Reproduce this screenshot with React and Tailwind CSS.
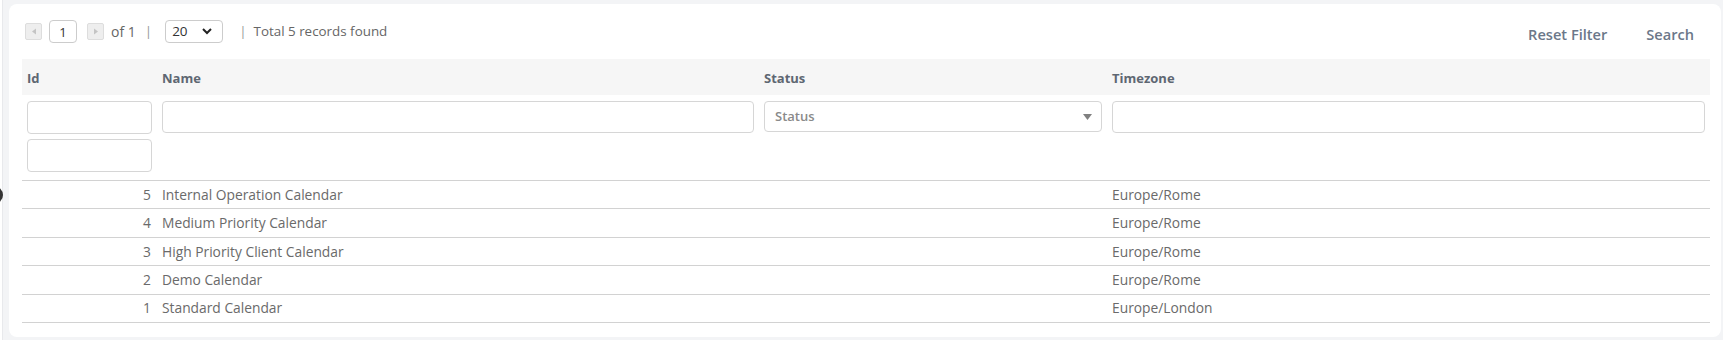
import React from 'react'

const rows = [
    { id: 5, name: 'Internal Operation Calendar', status: '', timezone: 'Europe/Rome' },
    { id: 4, name: 'Medium Priority Calendar', status: '', timezone: 'Europe/Rome' },
    { id: 3, name: 'High Priority Client Calendar', status: '', timezone: 'Europe/Rome' },
    { id: 2, name: 'Demo Calendar', status: '', timezone: 'Europe/Rome' },
    { id: 1, name: 'Standard Calendar', status: '', timezone: 'Europe/London' },
]

const cols = 'grid grid-cols-[135px_602px_348px_1fr]'

const PagerArrow = ({ dir }) => (
    <button className='w-[17px] h-[17px] bg-[#eeeeee] border border-[#dddddd] rounded-[2px] flex items-center justify-center'>
        <svg width='6' height='7' viewBox='0 0 6 7'>
            {dir === 'left'
                ? <path d='M5 0.5 L1 3.5 L5 6.5 Z' fill='#c4c4c4' />
                : <path d='M1 0.5 L5 3.5 L1 6.5 Z' fill='#c4c4c4' />}
        </svg>
    </button>
)

const App = () => {
    return (
        <div className='relative w-full h-[340px] bg-[#f3f4f6] pl-[9px] pt-[4px] pr-[2px] pb-[3px] font-["Open_Sans",sans-serif] overflow-hidden'>
            {/* side strip + collapse handle */}
            <div className='absolute left-0 top-0 h-full w-[3px] bg-white border-r border-[#e8e9ec]'></div>
            <div className='absolute left-[-15px] top-[186px] w-[18px] h-[18px] rounded-full bg-[#333333]'></div>

            <div className='bg-white rounded-lg h-full pl-[13px] pr-[11px]'>
                {/* toolbar */}
                <div className='h-[55px] pt-[16px] flex justify-between items-start'>
                    <div className='h-[23px] flex items-center pl-[3px] text-[13.4px] text-[#666666]'>
                        <PagerArrow dir='left' />
                        <input readOnly value='1' className='ml-[7px] w-[28px] h-[23px] border border-[#cccccc] rounded-[4px] text-center text-[13px] text-[#333333] outline-none' />
                        <div className='ml-[10px]'><PagerArrow dir='right' /></div>
                        <span className='ml-[7px] text-[14px]'>of 1</span>
                        <span className='ml-[9px] text-[#999999]'>|</span>
                        <div className='ml-[13px] w-[58px] h-[23px] border border-[#cccccc] rounded-[4px] flex items-center justify-between pl-[6px] pr-[10px] text-[13.5px] text-[#333333]'>
                            <span>20</span>
                            <svg width='10' height='7' viewBox='0 0 10 7'>
                                <path d='M1 1 L5 5 L9 1' fill='none' stroke='#222222' strokeWidth='2' />
                            </svg>
                        </div>
                        <span className='ml-[16px] text-[#999999]'>|</span>
                        <span className='ml-[7px]'>Total 5 records found</span>
                    </div>
                    <div className='flex items-center gap-[9px] text-[14.6px] font-semibold text-[#6b7789]'>
                        <button className='h-[30px] px-[15px]'>Reset Filter</button>
                        <button className='h-[30px] pl-[15px] pr-[16px]'>Search</button>
                    </div>
                </div>

                {/* table */}
                <div>
                    <div className={`${cols} h-[36px] bg-[#f6f6f6] items-center pt-[3px] text-[13px] font-bold text-[#5e6772]`}>
                        <div className='px-[5px]'>Id</div>
                        <div className='px-[5px]'>Name</div>
                        <div className='px-[5px]'>Status</div>
                        <div className='px-[5px]'>Timezone</div>
                    </div>

                    <div className={`${cols} pt-[6px] pb-[8px] border-b border-[#d2d2d2] items-start`}>
                        <div className='px-[5px] flex flex-col gap-[5px]'>
                            <input className='h-[33px] w-full border border-[#d6d6d6] rounded-[4px] outline-none' />
                            <input className='h-[33px] w-full border border-[#d6d6d6] rounded-[4px] outline-none' />
                        </div>
                        <div className='px-[5px]'>
                            <input className='h-[32px] w-full border border-[#d6d6d6] rounded-[4px] outline-none' />
                        </div>
                        <div className='px-[5px]'>
                            <div className='h-[31px] w-full border border-[#d6d6d6] rounded-[4px] flex items-center justify-between pl-[10px] pr-[9px]'>
                                <span className='text-[13px] font-semibold text-[#8a8a8a]'>Status</span>
                                <svg width='9' height='6' viewBox='0 0 9 6'>
                                    <path d='M0 0 L9 0 L4.5 6 Z' fill='#808080' />
                                </svg>
                            </div>
                        </div>
                        <div className='px-[5px]'>
                            <input className='h-[32px] w-full border border-[#d6d6d6] rounded-[4px] outline-none' />
                        </div>
                    </div>

                    {rows.map((row) => (
                        <div key={row.id} className={`${cols} h-[28.4px] border-b border-[#d2d2d2] items-center pt-[1px] text-[13.8px] text-[#6a6a6a]`}>
                            <div className='pl-[5px] pr-[6px] text-right'>{row.id}</div>
                            <div className='px-[5px]'>{row.name}</div>
                            <div className='px-[5px]'>{row.status}</div>
                            <div className='px-[5px]'>{row.timezone}</div>
                        </div>
                    ))}
                </div>
            </div>
        </div>
    )
}

export default App
